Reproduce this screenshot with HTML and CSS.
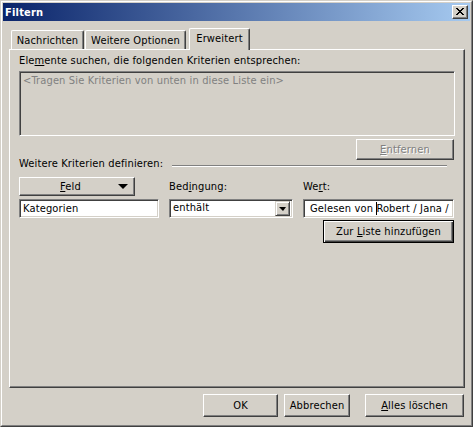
FILE: index.html
```html
<!DOCTYPE html>
<html lang="de">
<head>
<meta charset="utf-8">
<title>Filtern</title>
<link rel="stylesheet" href="styles.css">
</head>
<body>
<div class="window">
  <div class="frame">
    <div class="titlebar">
      <span class="title">Filtern</span>
      <span class="close">
        <svg width="8" height="7" viewBox="0 0 8 7"><path d="M0 0h2v1h-2z M6 0h2v1h-2z M1 1h2v1h-2z M5 1h2v1h-2z M2 2h4v1h-4z M3 3h2v1h-2z M2 4h4v1h-4z M1 5h2v1h-2z M5 5h2v1h-2z M0 6h2v1h-2z M6 6h2v1h-2z" fill="#000"/></svg>
      </span>
    </div>
    <div class="client">
      <div class="tabs">
        <div class="tab tab-1">Nachrichten</div>
        <div class="tab tab-2">Weitere Optionen</div>
        <div class="tab tab-3 active">Erweitert</div>
      </div>
      <div class="panel">
        <div class="label">Ele<u>m</u>ente suchen, die folgenden Kriterien entsprechen:</div>
        <div class="listbox">&lt;Tragen Sie Kriterien von unten in diese Liste ein&gt;</div>
        <div class="btn btn-remove disabled"><span><u>E</u>ntfernen</span></div>
        <div class="group-title"><span>Weitere Kriterien definieren:</span><span class="groove"></span></div>
        <div class="criteria">
          <div class="btn btn-field"><span class="btn-field-text"><u>F</u>eld</span><span class="arrow-big"></span></div>
          <div class="crit-label">Bed<u>i</u>ngung:</div>
          <div class="crit-label">We<u>r</u>t:</div>
          <div class="edit">Kategorien</div>
          <div class="combo"><span class="combo-text">enthält</span><span class="combo-btn"><span class="arrow-small"></span></span></div>
          <div class="edit edit-value">Gelesen von <span class="caret"></span>Robert / Jana /</div>
        </div>
        <div class="btn btn-default btn-add"><span>Zur <u>L</u>iste hinzufügen</span></div>
      </div>
      <div class="footer">
        <div class="btn btn-ok"><span>OK</span></div>
        <div class="btn btn-cancel"><span>Abbrechen</span></div>
        <div class="btn btn-clear"><span><u>A</u>lles löschen</span></div>
      </div>
    </div>
  </div>
</div>
</body>
</html>
```

FILE: styles.css
```css
* { box-sizing: border-box; }
html, body { margin: 0; padding: 0; }
body {
  width: 473px;
  height: 427px;
  overflow: hidden;
  background: #d4d0c8;
  font-family: "DejaVu Sans Condensed", "DejaVu Sans", sans-serif;
  font-size: 11px;
  line-height: 13px;
  letter-spacing: 0.15px;
  color: #000;
}
u { text-decoration: underline; text-underline-offset: 1px; }

.window {
  width: 473px;
  height: 427px;
  border: 1px solid;
  border-color: #d4d0c8 #404040 #404040 #d4d0c8;
  background: #d4d0c8;
}
.frame {
  height: 100%;
  border: 1px solid;
  border-color: #fff #808080 #808080 #fff;
  padding: 1px;
  display: flex;
  flex-direction: column;
}

.titlebar {
  height: 18px;
  flex: none;
  background: linear-gradient(to right, #0a246a, #a6caf0);
  display: flex;
  align-items: center;
  justify-content: space-between;
  padding: 0 2px;
}
.title {
  color: #fff;
  font-weight: bold;
  letter-spacing: 0.2px;
}
.close {
  width: 16px;
  height: 14px;
  background: #d4d0c8;
  border: 1px solid;
  border-color: #fff #404040 #404040 #fff;
  box-shadow: inset -1px -1px #808080;
  display: flex;
  align-items: center;
  justify-content: center;
  padding-bottom: 1px;
}
.close svg { display: block; }

.client {
  flex: 1;
  padding: 7px 5px 0 6px;
  display: flex;
  flex-direction: column;
}

.tabs {
  height: 21px;
  display: flex;
  align-items: flex-end;
  margin-left: 2px;
  flex: none;
}
.tab {
  height: 19px;
  border-top: 1px solid #fff;
  border-left: 1px solid #fff;
  border-right: 1px solid #404040;
  box-shadow: inset -1px 0 #808080;
  border-radius: 2px 2px 0 0;
  padding-top: 3px;
  text-align: center;
  white-space: nowrap;
  background: #d4d0c8;
}
.tab-1 { width: 73px; }
.tab-2 { width: 101px; margin-left: 1px; }
.tab-3 { width: 61px; margin-left: 3px; }
.tab.active {
  height: 22px;
  margin-bottom: -1px;
  position: relative;
  z-index: 1;
}

.panel {
  height: 339px;
  flex: none;
  border: 1px solid;
  border-color: #fff #404040 #404040 #fff;
  box-shadow: inset -1px -1px #808080;
  padding: 4px 9px 0 9px;
  display: flex;
  flex-direction: column;
}

.label { height: 13px; white-space: nowrap; }

.listbox {
  margin-top: 4px;
  height: 65px;
  border: 1px solid;
  border-color: #808080 #fff #fff #808080;
  box-shadow: inset 1px 1px #404040, inset -1px -1px #d4d0c8;
  padding: 2px 3px;
  color: #808080;
  white-space: nowrap;
}

.btn {
  border: 1px solid;
  border-color: #fff #404040 #404040 #fff;
  box-shadow: inset -1px -1px #808080;
  background: #d4d0c8;
  display: flex;
  align-items: center;
  justify-content: center;
  white-space: nowrap;
}
.btn.disabled { color: #808080; text-shadow: 1px 1px 0 #fff; }
.btn-default {
  border-color: #000;
  box-shadow: inset 1px 1px #fff, inset -1px -1px #404040, inset -2px -2px #808080;
}

.btn-remove {
  width: 98px;
  height: 21px;
  margin-top: 3px;
  margin-left: auto;
  margin-right: 1px;
}

.group-title {
  margin-top: -3px;
  height: 13px;
  display: flex;
  white-space: nowrap;
}
.groove {
  flex: 1;
  height: 2px;
  margin: 8px 8px 0 9px;
  border-top: 1px solid #808080;
  border-bottom: 1px solid #fff;
}

.criteria {
  margin-top: 7px;
  display: grid;
  grid-template-columns: 140px 124px 151px;
  grid-template-rows: 19px 19px;
  column-gap: 10px;
  row-gap: 3px;
}
.btn-field {
  width: 116px;
  justify-content: flex-start;
  padding-right: 6px;
}
.btn-field-text { flex: 1; text-align: center; padding-left: 3px; }
.arrow-big {
  width: 0;
  height: 0;
  border-left: 5px solid transparent;
  border-right: 5px solid transparent;
  border-top: 5px solid #000;
}
.crit-label {
  align-self: end;
  margin-bottom: 3px;
  white-space: nowrap;
}

.edit, .combo {
  height: 19px;
  border: 1px solid;
  border-color: #808080 #fff #fff #808080;
  box-shadow: inset 1px 1px #404040, inset -1px -1px #d4d0c8;
  background: #fff;
  white-space: nowrap;
  overflow: hidden;
  padding: 2px 3px 0 3px;
}
.edit-value { padding-left: 6px; }
.caret {
  display: inline-block;
  width: 1px;
  height: 13px;
  margin-right: -1px;
  background: #000;
  vertical-align: -3px;
}
.combo {
  display: flex;
  padding: 2px 2px 2px 3px;
}
.combo-text { flex: 1; margin-top: -1px; }
.combo-btn {
  width: 15px;
  height: 15px;
  margin-top: -1px;
  border: 1px solid;
  border-color: #d4d0c8 #404040 #404040 #d4d0c8;
  box-shadow: inset 1px 1px #fff, inset -1px -1px #808080;
  background: #d4d0c8;
  display: flex;
  align-items: center;
  justify-content: center;
}
.arrow-small {
  width: 0;
  height: 0;
  border-left: 4px solid transparent;
  border-right: 3px solid transparent;
  border-top: 4px solid #000;
}

.btn-add {
  width: 131px;
  height: 23px;
  margin-top: 2px;
  margin-left: auto;
  margin-right: 1px;
}

.footer {
  display: flex;
  justify-content: flex-end;
  padding-top: 6px;
  padding-right: 1px;
}
.footer .btn { height: 23px; }
.btn-ok { width: 75px; }
.btn-cancel { width: 66px; margin-left: 6px; }
.btn-clear { width: 99px; margin-left: 15px; }
```
